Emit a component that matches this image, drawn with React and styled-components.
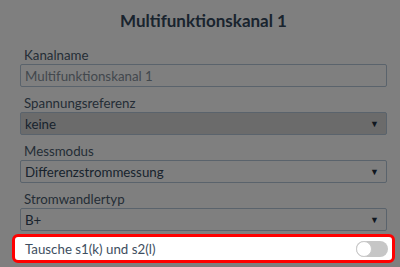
import React from "react";
import styled, { createGlobalStyle } from "styled-components";

const GlobalStyle = createGlobalStyle`
  html, body {
    margin: 0;
    padding: 0;
    background: #ffffff;
  }
  body {
    font-family: "Lato", "Open Sans", sans-serif;
  }
`;

const Page = styled.div`
  position: relative;
  width: 400px;
  height: 267px;
  overflow: hidden;
  background: #ffffff;
`;

const Panel = styled.div`
  display: flex;
  flex-direction: column;
  padding: 0 13px 0 20px;
`;

const Title = styled.div`
  height: 47px;
  display: flex;
  align-items: center;
  justify-content: center;
  padding-bottom: 6px;
  box-sizing: border-box;
  font-size: 17px;
  font-weight: 700;
  color: #34485d;
`;

const Field = styled.div`
  display: flex;
  flex-direction: column;
  margin-bottom: 8px;
`;

const Label = styled.label`
  height: 17px;
  line-height: 17px;
  padding-left: 4px;
  font-size: 13.3px;
  color: #4a5b6d;
`;

const TextInput = styled.input`
  height: 23px;
  box-sizing: border-box;
  border: 1px solid #b4c6d8;
  border-radius: 2px;
  padding: 0 4px;
  font-family: inherit;
  font-size: 13.3px;
  color: #85909b;
  background: #ffffff;
  outline: none;
`;

const SelectBox = styled.div`
  height: 23px;
  box-sizing: border-box;
  border: 1px solid #b4c6d8;
  border-radius: 2px;
  padding: 0 4px;
  display: flex;
  align-items: center;
  font-size: 13.3px;
  color: #33475b;
  background: ${(props) => (props.disabled ? "#d6d6d6" : "#ffffff")};
`;

const Arrow = styled.span`
  margin-left: auto;
  margin-right: 3px;
  font-size: 9px;
  color: #1f2f40;
`;

const Overlay = styled.div`
  position: absolute;
  inset: 0;
  background: rgba(0, 0, 0, 0.5);
  z-index: 5;
`;

const HighlightRow = styled.div`
  position: relative;
  z-index: 10;
  margin: -5px -8px 0 -8px;
  height: 29px;
  box-sizing: border-box;
  border: 3px solid #ff0000;
  border-radius: 6px;
  background: #ffffff;
  display: flex;
  align-items: center;
  padding: 0 4px 0 10px;
  font-size: 13.3px;
  color: #3d4e60;
`;

const Toggle = styled.div`
  margin-left: auto;
  width: 32px;
  height: 16px;
  border-radius: 8px;
  background: #c6c6c6;
  position: relative;
`;

const Knob = styled.div`
  position: absolute;
  left: 0;
  top: 0;
  width: 16px;
  height: 16px;
  box-sizing: border-box;
  border-radius: 50%;
  background: #ffffff;
  border: 1px solid #c9c9c9;
`;

export default function App() {
  return (
    <>
      <GlobalStyle />
      <Page>
        <Panel>
          <Title>Multifunktionskanal 1</Title>
          <Field>
            <Label>Kanalname</Label>
            <TextInput readOnly value="Multifunktionskanal 1" />
          </Field>
          <Field>
            <Label>Spannungsreferenz</Label>
            <SelectBox disabled>
              keine
              <Arrow>▼</Arrow>
            </SelectBox>
          </Field>
          <Field>
            <Label>Messmodus</Label>
            <SelectBox>
              Differenzstrommessung
              <Arrow>▼</Arrow>
            </SelectBox>
          </Field>
          <Field>
            <Label>Stromwandlertyp</Label>
            <SelectBox>
              B+
              <Arrow>▼</Arrow>
            </SelectBox>
          </Field>
          <HighlightRow>
            Tausche s1(k) und s2(l)
            <Toggle>
              <Knob />
            </Toggle>
          </HighlightRow>
        </Panel>
        <Overlay />
      </Page>
    </>
  );
}
